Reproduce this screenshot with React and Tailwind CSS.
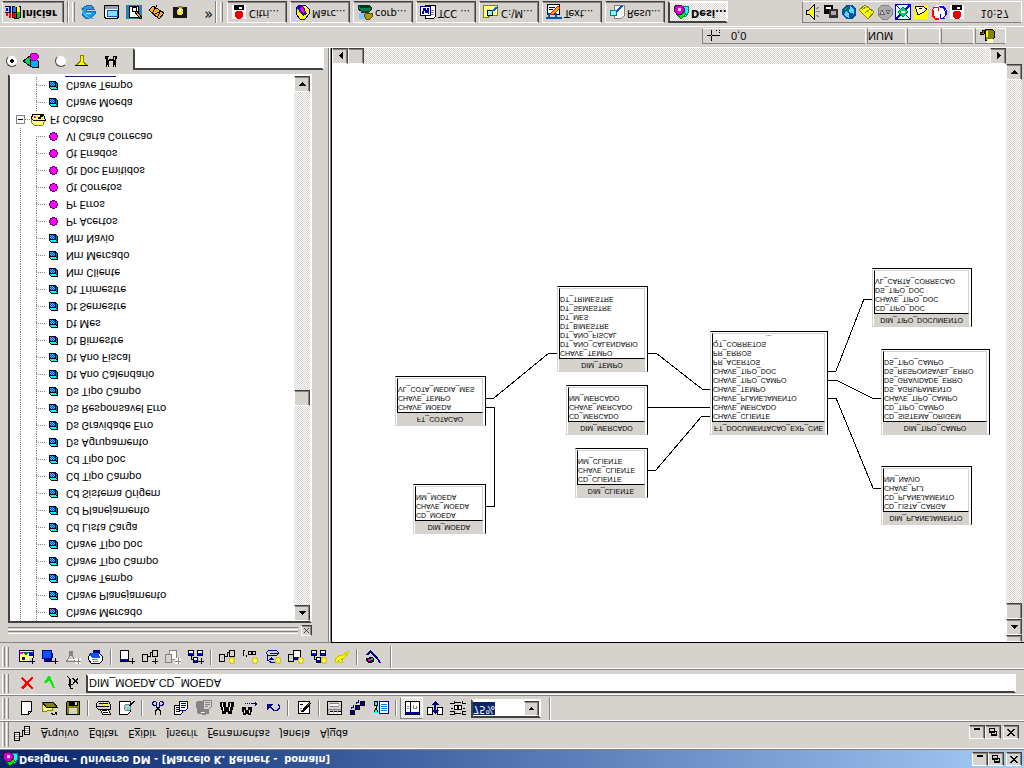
import { useState } from 'react';

// every drawing is a list of [path, fill, stroke]
const ICONS = {
  blank: [['M2.5 1.5h7l3 3v10h-10z', '#fff', '#000'], ['M9.5 1.5v3h3', 'none', '#000']],
  open: [
    ['M0.5 13.5v-9h4l1 1h5v3', '#ffff84', '#848200'], ['M0.5 13.5l4-5h11l-4 5z', '#848200', '#000'],
    ['M9.5 2.5l2-1h1l2 2M12.5 3.5h2v-2', 'none', '#000'],
  ],
  save: [
    ['M1.5 1.5h13v13h-12l-1-1z', '#848200', '#000'], ['M4 2h8v6h-8z', '#d6d3ce'],
    ['M4 10h9v5h-9z', '#000'], ['M10 11h2v3h-2z', '#d6d3ce'],
  ],
  print: [
    ['M4.5 6.5l2-5h8l-2 5z', '#fff', '#000'], ['M7 3.5h5M6 5.5h5', 'none', '#000'],
    ['M0.5 8.5l2-2h12v5l-2 3h-10l-2-2z', '#d6d3ce', '#000'], ['M1 9.5h12M3 12.5h9', 'none', '#000'],
    ['M7 10h4v2h-4z', '#ffff00'],
  ],
  preview: [
    ['M0.5 1.5h8l3 3v10h-11z', '#fff', '#000'], ['M6.5 5.5h4l1 1v4l-1 1h-4l-1-1v-4z', '#adcfce', '#848284'],
    ['M8 6h2v2h-2z', '#00ffff'], ['M10 10l5 5M11 10l5 5', 'none', '#000'],
  ],
  cut: [
    ['M5.5 1v4l4 4M10.5 1v4l-4 4', 'none', '#000'],
    ['M6.5 9.5v4l-1 1h-2l-1-2l1-2h3M9.5 9.5v4l1 1h2l1-2l-1-2h-3', 'none', '#000084'],
  ],
  copy: [
    ['M1.5 1.5h6l2 2v7h-8z', '#fff', '#000'], ['M3 4.5h4M3 6.5h4M3 8.5h3', 'none', '#000'],
    ['M6.5 5.5h6l2 2v7h-8z', '#fff', '#000084'], ['M8 8.5h4M8 10.5h5M8 12.5h5', 'none', '#000084'],
  ],
  paste: [
    ['M1 3l2-1h2l1-1h3l1 1h2l1 1v11l-1 1h-11l-1-1z', '#848284'],
    ['M7.5 6.5h5l3 3v6h-8z', '#d6d3ce', '#848284'], ['M9 9.5h3M9 11.5h5M9 13.5h5', 'none', '#848284'],
    ['M5 3.5h4', 'none', '#fff'],
  ],
  find: [
    ['M3 2h4v2h2v-2h4v3l2 5v4h-6v-5h-2v5h-6v-4l2-5z', '#000'],
    ['M4.5 5v4M3.5 9v4M10.5 5v4M11.5 9v4', 'none', '#fff'],
  ],
  findNext: [
    ['M1 1h3v1h2v-1h3v2l1 2v4h-4v-3h-2v3h-4v-4l1-2z', '#000'],
    ['M2.5 3v3M7.5 3v3', 'none', '#fff'],
    ['M3 12.5h1M5 12.5h1M7 12.5h1M9 12.5h6M13.5 10.5v4M14.5 11.5v2', 'none', '#000084'],
  ],
  undo: [['M4 10.5l5-5h3l2 2v3l-1 1', 'none', '#000084'], ['M2 6v6h6z', '#000084']],
  edit: [
    ['M2.5 2.5h11v12h-11z', '#fff', '#000'], ['M4 5.5h3M4 7.5h2', 'none', '#848284'],
    ['M6 4l8 9M7 4l8 9M5 4l8 9', 'none', '#000'], ['M4 11.5h3', 'none', '#000'], ['M11 10l3 3', 'none', '#848200'],
  ],
  props: [
    ['M0.5 1.5h14v13h-14z', '#d6d3ce', '#000'], ['M1 2h13v4h-13z', '#bdbabd'], ['M3 9h8v3h-8z', '#fff'],
    ['M3 9.5h9M3 12.5h9M1 6.5h13', 'none', '#848284'],
    ['M3 2h3v2h-3zM7 2h3v2h-3zM11 2h3v2h-3z', '#fff'], ['M3 4.5h3M7 4.5h3M11 4.5h3', 'none', '#000'],
  ],
  steps: [
    ['M0 1h5v5h-5zM5 6h5v5h-5zM10 10h5v5h-5z', '#000'], ['M1 2h3v3h-3zM6 7h3v3h-3zM11 11h3v3h-3z', '#0000a5'],
    ['M2 3h1v1h-1zM7 8h1v1h-1zM12 12h1v1h-1z', '#000'],
    ['M1.5 7v2h2M3 8v3M6.500 12v2h2M8 13v3', 'none', '#0000a5'],
  ],
  list: [
    ['M6.5 2.5h9v12h-9z', '#fff', '#000084'], ['M8 5.5h6M8 7.5h6M8 9.5h6M8 11.5h6', 'none', '#0082ff'],
    ['M1.500 10.500h3v4h-3zM3 8v2M0.500 3.500l2.500 4l2.500 -4', '#00ffff', '#000'],
  ],
  panes: [
    ['M1.5 1.5h14v13h-14z', '#fff', '#000'], ['M2 2h13v2h-13z', '#0000a5'],
    ['M6.5 4v10', 'none', '#000'], ['M3 7.5h2M3 9.5h2M9 11.5v-4h3v3', 'none', '#848284'],
  ],
  arrange: [
    ['M0.5 1.5h15v7h-15zM5.5 1.5v7M10.5 1.5v7', '#fff', '#000'], ['M6 1h4v8h-4z', '#d6d3ce'],
    ['M8 2l4 4h-3v5h3l-4 4l-4-4h3v-5h-3z', '#000084'],
  ],
  zoomFit: [
    ['M4.5 6.5h3v4h-3zM8.5 6.5h3v4h-3z', '#fff', '#000'],
    ['M0 1.5h4v3h-4M16 1.5h-4v3h4M0 12.5h4v3M16 12.5h-4v3M1 7.5h2M13 7.5h2M5 2.5h6M5 13.5h6', 'none', '#000'],
  ],
  newClass: [
    ['M0.5 3.5h14v11h-14z', '#ffff94', '#000'], ['M1 11h3v2h-3z', '#ef00ef'], ['M4 13h6l-3-4z', '#008200'],
    ['M10 9h4v4h-4z', '#0000ff'], ['M3 5h3v3h-3z', '#0000a5'], ['M1 14h14v1h-14z', '#000'],
  ],
  newObject: [
    ['M0.5 6.5h9v8h-9z', '#0055ff', '#000084'], ['M2 3h9v9h-2v-6h-7z', '#0000a5'], ['M4 3.500h7', 'none', '#000'],
  ],
  newCond: [
    ['M1.5 3.5h9l-3 5v5h-3v-5z', '#d6d3ce', '#848284'], ['M3 5.500h7', 'none', '#fff'], ['M5 9h2v5h-2z', '#848284'],
  ],
  hand: [
    ['M3.5 1.5h8l3 3v4l-3 3h-9l-2-3v-3z', '#fff', '#000'], ['M4 7h8l-1 5h-8l-1-2z', '#0055ff'], ['M5 12h7v3h-7z', '#000084'],
    ['M4.500 3.500h5M3.500 5.500h6', 'none', '#848284'],
  ],
  addTable: [['M1.5 3.5h8v11h-8z', '#fff', '#000'], ['M2 4h7v2h-7z', '#0000a5']],
  addJoin: [['M0.5 3.5h5v7h-5zM10.5 8.5h5v6h-5z', '#d6d3ce', '#000'], ['M6 8.5h2v4h2', 'none', '#000']],
  addAlias: [['M4.5 5.5h7v9h-7z', '#fff', '#848284'], ['M0.5 2.500h6v8h-6z', '#d6d3ce', '#848284']],
  addContext: [
    ['M0.5 9.5h5v5h-5zM9.5 9.5h5v5h-5zM5.5 2.5h4v5h-4z', '#fff', '#000'],
    ['M1 10h4v2h-4zM10 10h4v2h-4zM6 3h3v2h-3z', '#0000ff'], ['M3.5 9v-3h2', 'none', '#000'],
  ],
  cardinality: [['M1.5 9v6M2.5 14v1M4.5 8v2M6.500 10.500h3v3h-3zM10.500 10.500h3v3h-3z', 'none', '#000']],
  loops: [
    ['M3.5 9.5h8l2 2v1l-2 2h-8l-2-2v-1zM5 11.5h8M2.500 10v-5l3-2h4', 'none', '#000084'], ['M7 8l-4-3h6z', '#0000ce'],
  ],
  detectAlias: [['M5.5 5.5h7v9h-7z', '#fff', '#000'], ['M0.5 3.500h5v7h-5z', '#d6d3ce', '#000'], ['M6 6h6v2h-6z', '#0000a5']],
  checkAll: [
    ['M1 3l3-1l1 2l2-2l2 1l-1 3l2 1l5 6l-1 1l-6-5l-3 1l-2-3l-2-1z', '#ffff00', '#cec700'], ['M4 4h1v1h-1zM7 5h1v1h-1z', '#848200'],
  ],
  hierarchy: [
    ['M1.5 10l4 4M2.500 10l3 3l10-11M5.500 14.500l10-11', 'none', '#000084'], ['M1 4l3-2l5 1v4l-3 1l-5-1z', '#000'],
    ['M3 4h3v2h-3z', '#ef00ef'], ['M6 5h2v2h-2z', '#00cf63'],
  ],
  cancel: [['M2 3l2-1l4 4l5-4l1 1l-4 5l4 5l-1 1l-5-4l-5 4l-1-1l4-5z', '#ff0000']],
  accept: [['M2 8h2l3 3l4-8h2l-5 12h-2z', '#00ef00']],
  fx: [['M7.5 2.5h-2l-1 3v7l-2 2M3 6.5h5M8 7.5l5 5M13 7.5l-5 5M7 12.5h2', 'none', '#000'], ['M5 4h1v8h-1z', '#000']],
  schema: [
    ['M0.5 1.5h5v8h-5zM10.5 7.5h5v8h-5z', '#fff', '#000'], ['M6 5.5h2v6h2', 'none', '#000'],
    ['M1 3.5h4M1 5.5h4M1 7.500h4M11 9.5h4M11 11.5h4M11 13.500h4', 'none', '#848284'],
  ],
  designer: [
    ['M8 4h5l2 3v7h-7z', '#00ffff', '#008284'], ['M2 8l6-7l5 5l-5 6z', '#00ef00', '#008200'],
    ['M1 9l3-3h5l2 3v3l-3 3h-4l-3-2z', '#ce00ce', '#5a005a'], ['M5 9h3v3h-3z', '#ffbeff'],
  ],
  windows: [
    ['M7 2l4-1l5 1v12l-4-1l-5 1z', '#000'], ['M8 3l3-1v5h-3z', '#ff0000'], ['M12 2l3 1v5h-3z', '#00cf00'],
    ['M8 8h3v5h-3z', '#0082ff'], ['M12 8h3v5h-3z', '#ffff00'],
    ['M1 4h2v3h-2zM4 2h2v5h-2z', '#ff0000'], ['M0 7h6v1h-6zM0 13h6v1h-6z', '#000'], ['M1 9h2v3h-2zM4 8h2v5h-2z', '#0000ff'],
  ],
  ie: [
    ['M2 6l3-4h6l4 4v3h-9v2h8l-2 3l-4 1l-4-2l-2-3z', '#299ad6', '#1865b5'], ['M6 6h5v1h-5z', '#c6ebff'],
    ['M1 13l2-6l6-5l5-1', 'none', '#52c3ff'],
  ],
  mail: [
    ['M1.5 2.5l2-1h11l1 2v11h-14z', '#fff', '#000'], ['M2 11h13v3h-13z', '#9c9aad'],
    ['M4.5 3.5h10v6h-10z', '#84dfff', '#0055c6'],
  ],
  desktop: [
    ['M0 1h16v14h-16z', '#2982ad'], ['M3.5 2.5h9v11h-9z', '#fff', '#000'], ['M6.500 8.500h4v4h-4z', '#ffffce', '#000'],
    ['M9 8l2 1l5-7l-2-1z', '#ffaa00', '#000'],
  ],
  channel: [['M0 10l4 4l11-7l-5-6z', '#ffaa18', '#000'], ['M3 6l5 9M8 2l4 8M4 5l8 4', 'none', '#000']],
  lamp: [
    ['M1 2h14v11h-14z', '#181818'], ['M6 5h4l1 2v3l-2 2h-2l-2-2v-3z', '#ffdf39'], ['M7 8h2v3h-2z', '#fff'], ['M6 12h5v2h-5z', '#8c8a5a'],
  ],
  citrix: [['M1 1h14v14h-14z', '#fff'], ['M4 3h8v5h-8zM6 1h4v8h-4zM5 2h6v7h-6z', '#ef0000'], ['M3 10h10v5h-10z', '#000'], ['M8 11h3v2h-3z', '#fff']],
  marc: [['M2 6l4-5h5l4 5v5l-4 4h-6l-3-4z', '#ffff00', '#000084'], ['M2 12l3 3l5-2l3-7l-4-2l-4 5z', '#3100ad'], ['M6 12l3-5l2 1l-3 6z', '#ff00ff']],
  corp: [
    ['M1 11l3-2h9l2 3l-3 3h-10z', '#008252', '#003018'], ['M3 12h10v2h-10z', '#00351a'],
    ['M2 1h6v6h-6z', '#84c6ff'], ['M9 1h4l2 2v4h-6l-2-2z', '#ad9a00', '#525100'], ['M4 7h8v2h-8z', '#313031'],
  ],
  word: [
    ['M5.5 1.5h8l2 2v11h-10z', '#fff', '#000'], ['M0.5 4.5h10v9h-10z', '#fff', '#000084'],
    ['M2 6l2 6l2-5l2 5l1-6', 'none', '#0000a5'], ['M3 6l2 6l2-5l1 5', 'none', '#0000a5'], ['M11 5.5h3M11 7.5h3M11 9.5h3', 'none', '#848284'],
  ],
  explore: [
    ['M0.5 2.5h5l1 2h8v10h-14z', '#ffff94', '#848200'], ['M4.5 4.5h5v5h-5z', '#84ffff', '#000'],
    ['M9 9l6 5M9 8l6 5', 'none', '#0055ff'],
  ],
  textpad: [
    ['M1.5 5.5h12v10h-12z', '#fff', '#000'], ['M3 12.500h6M3 10.500h4', 'none', '#000'], ['M4 6l8 8l2-2l-7-7z', '#ffaa00', '#ff0000'],
    ['M0 1h16v2h-5v4h-2v-4h-5v4h-2v-4h-2z', '#0055c6'],
  ],
  resu: [
    ['M5.5 1.5h7l3 3v10h-10z', '#fff', '#848284'], ['M1.5 4.5h6v5h-6z', '#84ffff', '#008284'], ['M7 9l6 6M7 8l6 6M8 8l6 6', 'none', '#0055ff'],
  ],
  speaker: [['M1 6h3l5-5v14l-5-5h-3z', '#ffff00', '#000'], ['M11 5l3-2M11 8.5h4M11 11l3 2', 'none', '#848284']],
  machines: [['M1 6h9v9h-9z', '#000'], ['M3 11h5v2h-5z', '#fff'], ['M6 2h9v9h-9z', '#313131'], ['M8 5h5v4h-5z', '#adaaad']],
  globe: [['M1 5l4-4h6l4 4v6l-4 4h-6l-4-4z', '#00559c'], ['M3 5l5-3v4l-3 3zM8 8l5-2v5l-4 3z', '#5ad7ff'], ['M3 10l3 1v3z', '#009a52']],
  note: [['M0 10l6 5l9-7l-6-7z', '#ffff00', '#848200'], ['M3 10l4 3M6 7l5 4', 'none', '#848284']],
  sync: [['M1 5l4-4h6l4 4v6l-4 4h-6l-4-4z', '#adaaad', '#848284'], ['M3 6h4l-2 4zM9 10h4l-2-4z', '#d6d3ce', '#636163']],
  net: [
    ['M0.5 0.5h15v15h-15z', '#dfffff', '#0000a5'], ['M1 1l14 14M15 1l-14 14M1 2l13 13M2 1l13 13', 'none', '#0000ff'],
    ['M8 3l5 5l-5 5l-5-5z', '#00cf63', '#008242'], ['M6 7h4v2h-4z', '#fff'],
  ],
  pen: [['M1 1h14v14h-14z', '#ffff00'], ['M2 14l3-9l6 3l3 3l-5 3z', '#ffffce', '#000'], ['M6 11h3v1h-3z', '#000']],
  cycle: [
    ['M1 5l4-4h6l4 4v6l-4 4h-6l-4-4z', '#fff'], ['M8 1h-4l-3 4v5l3 3M2 13h5v-4M8 2h-4l-2 4v4', 'none', '#ff0000'],
    ['M8 14h4l3-4v-5l-3-3M9 6v-4h5M9 13h3l2-4v-4', 'none', '#0000ff'],
  ],
  plug: [['M5 4h7l2 2v7l-2 2h-6l-1-2z', '#848200', '#000'], ['M7 1h6v4h-6z', '#ffffce'], ['M1 9l3 1v4h-2v-2h-2z', '#848200', '#000'], ['M6 7h2v6h-2z', '#ffff00']],
  cross: [['M0 8.5h4M5 8.500h6M4.500 3v5M4.500 9v5', 'none', '#000'], ['M11 8.500h2M12.500 13v1M12.500 11v1M9 13.500h1', 'none', '#000']],
  objects: [
    ['M0 8l7-5v10z', '#00cf63', '#000'], ['M7.5 3.5l2-2h6v6l-2 2h-6z', '#00aaff', '#000'], ['M8 9h5l2 2v3l-2 2h-4l-2-2v-3z', '#ef00ef', '#840084'],
  ],
  cond: [['M1 3.5h11l-4 4v6h-3v-6z', '#ffff00', '#848200'], ['M0 3h13v1h-13z', '#000']],
};
ICONS.detectJoin = ICONS.addJoin;
ICONS.detectContext = ICONS.addContext;

// small badges: "new" is a plus, "detect" is a light
const BADGES = {
  '+': [['M10 1h6v6h-6z', '#d6d3ce'], ['M13 1h1v6h-1zM10 3h7v1h-7z', '#000']],
  '-': [['M10 1h6v6h-6z', '#fff'], ['M13 1h1v6h-1zM10 3h7v1h-7z', '#848284']],
  '*': [['M11.5 1.5h3l1 2v2l-1 2h-3l-1-2v-2z', '#ffff00', '#cebe4a'], ['M12 3h2v2h-2z', '#ffffce']],
};

function Icon({ name, badge, className = '' }) {
  const paths = badge ? [...ICONS[name], ...BADGES[badge]] : ICONS[name];
  return (
    <svg width="16" height="16" viewBox="0 0 16 16" shapeRendering="crispEdges" className={`shrink-0 ${className}`} aria-hidden="true">
      {paths.map(([d, fill, stroke], i) => <path key={i} d={d} fill={fill} stroke={stroke || 'none'} />)}
    </svg>
  );
}

const RAISED = 'border border-t-white border-l-white border-r-[#424142] border-b-[#424142] bg-[#d6d3ce] shadow-[inset_-1px_-1px_#848284]';
const SUNKEN = 'border border-t-[#848284] border-l-[#848284] border-r-white border-b-white';
const WELL = 'border-2 border-t-[#424142] border-l-[#424142] border-r-white border-b-white bg-white';
const DITHER = 'bg-[repeating-conic-gradient(#ffffff_0_25%,#d6d3ce_0_50%)] bg-[length:2px_2px]';
const UI = "font-['DejaVu_Sans_Condensed','DejaVu_Sans',sans-serif]";

const ARROWS = { up: 'M4 1h1v1h1v1h1v1h1v1h-7v-1h1v-1h1v-1h1z', down: 'M1 1h7v1h-1v1h-1v1h-1v1h-1v-1h-1v-1h-1v-1h-1z', left: 'M3 3h1v-1h1v-1h1v-1h1v7h-1v-1h-1v-1h-1v-1h-1z', right: 'M3 0h1v1h1v1h1v1h1v1h-1v1h-1v1h-1v1h-1z' };

function ScrollButton({ dir }) {
  return (
    <button aria-label={`Scroll ${dir}`} className={`flex h-4 w-4 shrink-0 items-center justify-center ${RAISED}`}>
      <svg width="9" height="7" viewBox="0 0 9 7" shapeRendering="crispEdges"><path d={ARROWS[dir]} /></svg>
    </button>
  );
}

function Grip() {
  return (
    <div className="flex w-[15px] shrink-0 gap-px self-stretch py-px pl-[2px]">
      <div className="w-[3px] border-l border-r border-l-white border-r-[#848284]" />
      <div className="w-[3px] border-l border-r border-l-white border-r-[#848284]" />
    </div>
  );
}

function Sep() {
  return <div className="mx-[3px] h-4 w-[2px] shrink-0 border-l border-r border-l-[#848284] border-r-white" />;
}

function Bar({ children, className = 'h-[26px] pb-[2px]' }) {
  return (
    <div className={`flex shrink-0 items-center border-b border-b-white shadow-[inset_0_-1px_#848284] ${className}`}>
      {children}
    </div>
  );
}

function Tools({ groups }) {
  return groups.map((group, i) => (
    <div key={i} className="flex items-center">
      {i > 0 && <Sep />}
      {group.map((t) => {
        const [name, badge] = t.split(' ');
        return (
          <button key={t} aria-label={name} className={`flex h-[22px] w-[23px] items-center justify-center ${name === 'panes' ? `${SUNKEN} ${DITHER}` : ''}`}>
            <Icon name={name} badge={badge} />
          </button>
        );
      })}
    </div>
  ));
}

const CAPTION = {
  Minimize: [['M3 8h6v2h-6z', '#000']],
  Restore: [['M4.5 2.5h5v4h-5zM4 3.5h6', 'none', '#000'], ['M2.5 5.5h5v4h-5zM2 6.5h6', '#d6d3ce', '#000']],
  Close: [['M2 2h2v1h1v1h2v-1h1v-1h2v1h-1v1h-1v1h-1v1h1v1h1v1h1v1h-2v-1h-1v-1h-2v1h-1v1h-2v-1h1v-1h1v-1h1v-1h-1v-1h-1v-1h-1z', '#000']],
};

function CaptionButtons({ className = '' }) {
  return (
    <div className={`ml-auto flex ${className}`}>
      {Object.keys(CAPTION).map((label) => (
        <button key={label} aria-label={label} className={`flex h-[14px] w-4 items-center justify-center ${RAISED} ${label === 'Close' ? 'ml-[2px]' : ''}`}>
          <svg width="12" height="12" viewBox="0 0 12 12" shapeRendering="crispEdges" className="shrink-0">
            {CAPTION[label].map(([d, fill, stroke], i) => <path key={i} d={d} fill={fill} stroke={stroke} />)}
          </svg>
        </button>
      ))}
    </div>
  );
}

const MENU = [['', 'A', 'rquivo'], ['', 'E', 'ditar'], ['E', 'x', 'ibir'], ['', 'I', 'nserir'], ['', 'F', 'erramentas'], ['', 'J', 'anela'], ['Aj', 'u', 'da']];

const DIMENSIONS = [
  'Chave Mercado', 'Chave Planejamento', 'Chave Tempo', 'Chave Tipo Campo', 'Chave Tipo Doc',
  'Cd Lista Carga', 'Cd Planejamento', 'Cd Sistema Origem', 'Cd Tipo Campo', 'Cd Tipo Doc',
  'Ds Agrupamento', 'Ds Gravidade Erro', 'Ds Responsavel Erro', 'Ds Tipo Campo',
  'Dt Ano Calendario', 'Dt Ano Fiscal', 'Dt Bimestre', 'Dt Mes', 'Dt Semestre', 'Dt Trimestre',
  'Nm Cliente', 'Nm Mercado', 'Nm Navio',
];
const MEASURES = ['Pr Acertos', 'Pr Erros', 'Qt Corretos', 'Qt Doc Emitidos', 'Qt Errados', 'Vl Carta Correcao'];

function TreeItem({ label, measure, outer = true, last }) {
  return (
    <li className="flex h-[17px] items-center">
      <div className={`ml-[10px] w-4 self-stretch border-l border-dotted ${outer ? 'border-[#848284]' : 'border-transparent'}`} />
      <div className="flex w-[13px] flex-col self-stretch">
        <div className="h-[9px] w-[9px] border-b border-l border-dotted border-[#848284]" />
        <div className={`h-2 border-l border-dotted ${last ? 'border-transparent' : 'border-[#848284]'}`} />
      </div>
      <svg width="9" height="9" viewBox="0 0 9 9" shapeRendering="crispEdges" className="shrink-0" aria-hidden="true">
        {measure ? (
          <>
            <path d="M3 0h3v1h2v2h1v3h-1v2h-2v1h-3v-1h-2v-2h-1v-3h1v-2h2z" fill="#5a005a" />
            <path d="M3 1h3v1h1v1h1v3h-1v1h-1v1h-3v-1h-1v-1h-1v-3h1v-1h1z" fill="#ff00ff" />
          </>
        ) : (
          <>
            <path d="M0 2h1v-1h1v-1h7v7h-1v1h-1v1h-7z" fill="#000" />
            <path d="M2 1h6v1h-1v1h-6v-1h1z" fill="#00ffff" />
            <path d="M7 3h1v4h-1z" fill="#008284" />
            <path d="M1 4h5v4h-5z" fill="#0041ff" />
            <path d="M2 4h1v1h-1zM4 4h1v1h-1zM1 5h1v1h-1zM3 5h1v1h-1zM5 5h1v1h-1zM2 6h1v1h-1zM4 6h1v1h-1zM1 7h1v1h-1zM3 7h1v1h-1z" fill="#42c3ff" />
          </>
        )}
      </svg>
      <span className="ml-2 whitespace-nowrap">{label}</span>
    </li>
  );
}

function ObjectTree() {
  return (
    <div className={`flex min-h-0 flex-1 ${WELL}`}>
      <ul className="min-w-0 flex-1 overflow-hidden font-[Roboto,sans-serif] text-[11px] leading-[15px]">
        {DIMENSIONS.map((l) => <TreeItem key={l} label={l} />)}
        {MEASURES.map((l, i) => <TreeItem key={l} label={l} measure last={i === MEASURES.length - 1} />)}
        <li className="flex h-[17px] items-center">
          <button aria-label="Collapse Ft Cotacao" className="ml-[6px] flex h-[9px] w-[9px] items-center justify-center border border-[#848284] bg-white">
            <span className="h-px w-[5px] bg-black" />
          </button>
          <div className="w-[5px] border-t border-dotted border-[#848284]" />
          <svg width="16" height="13" viewBox="0 0 16 13" shapeRendering="crispEdges" className="shrink-0" aria-hidden="true">
            <path d="M1 4l3-3h9l1 3v5h-11z" fill="#ffff84" stroke="#848200" />
            <path d="M1.500 7.500l2-2h12l-2 6h-11z" fill="#ffff52" stroke="#000" />
            <path d="M4 8h2v2h-2z" fill="#ff00ff" />
            <path d="M8 7h3v2h-3zM10 9h3v2h-3z" fill="#000" />
          </svg>
          <span className="ml-1">Ft Cotacao</span>
        </li>
        <TreeItem label="Chave Moeda" outer={false} />
        <TreeItem label="Chave Tempo" outer={false} />
        <li className="ml-[55px] h-[2px] w-[51px] bg-[#08246b]" />
      </ul>
      <div className={`flex w-4 flex-col ${DITHER}`}>
        <ScrollButton dir="up" />
        <div className="flex-[199]" />
        <div className={`h-4 shrink-0 ${RAISED}`} />
        <div className="flex-[298]" />
        <ScrollButton dir="down" />
      </div>
    </div>
  );
}

const TABLES = [
  { name: 'FT_COTACAO', x: 63, y: 216, w: 91, fields: ['CHAVE_MOEDA', 'CHAVE_TEMPO', 'VL_COTA_MEDIA_MES'] },
  { name: 'DIM_MOEDA', x: 81, y: 108, w: 73, fields: ['CD_MOEDA', 'CHAVE_MOEDA', 'NM_MOEDA'] },
  { name: 'DIM_TEMPO', x: 225, y: 270, w: 91, fields: ['CHAVE_TEMPO', 'DT_ANO_CALENDARIO', 'DT_ANO_FISCAL', 'DT_BIMESTRE', 'DT_MES', 'DT_SEMESTRE', 'DT_TRIMESTRE'] },
  { name: 'DIM_MERCADO', x: 234, y: 207, w: 82, fields: ['CD_MERCADO', 'CHAVE_MERCADO', 'NM_MERCADO'] },
  { name: 'DIM_CLIENTE', x: 243, y: 144, w: 73, fields: ['CD_CLIENTE', 'CHAVE_CLIENTE', 'NM_CLIENTE'] },
  { name: 'FT_DOCUMENTACAO_EXP_CNE', x: 378, y: 207, w: 118, more: true, fields: ['CHAVE_CLIENTE', 'CHAVE_MERCADO', 'CHAVE_PLANEJAMENTO', 'CHAVE_TEMPO', 'CHAVE_TIPO_CAMPO', 'CHAVE_TIPO_DOC', 'PR_ACERTOS', 'PR_ERROS', 'QT_CORRETOS'] },
  { name: 'DIM_TIPO_DOCUMENTO', x: 540, y: 315, w: 100, fields: ['CD_TIPO_DOC', 'CHAVE_TIPO_DOC', 'DS_TIPO_DOC', 'VL_CARTA_CORRECAO'] },
  { name: 'DIM_TIPO_CAMPO', x: 549, y: 207, w: 109, fields: ['CD_SISTEMA_ORIGEM', 'CD_TIPO_CAMPO', 'CHAVE_TIPO_CAMPO', 'DS_AGRUPAMENTO', 'DS_GRAVIDADE_ERRO', 'DS_RESPONSAVEL_ERRO', 'DS_TIPO_CAMPO'] },
  { name: 'DIM_PLANEJAMENTO', x: 549, y: 117, w: 91, fields: ['CD_LISTA_CARGA', 'CD_PLANEJAMENTO', 'CHAVE_PLJ', 'NM_NAVIO'] },
];

const JOINS = [
  '154,244 162,244 217,289 225,289',
  '154,235 162,235 162,136 154,136',
  '316,289 324,289 370,253 378,253',
  '316,235 378,235',
  '316,172 324,172 370,226 378,226',
  '496,271 504,271 532,343 540,343',
  '496,262 504,262 540,244 549,244',
  '496,244 504,244 541,154 549,154',
];

function TableBox({ table }) {
  return (
    <div
      className="absolute border border-t-[#d6d3ce] border-l-[#d6d3ce] border-r-black border-b-black bg-white pr-[2px] pb-px pl-px"
      style={{ left: table.x, top: table.y, width: table.w }}
    >
      <div className="h-3 bg-[#d6d3ce] text-center leading-[12px] whitespace-nowrap">{table.name}</div>
      <ul className="relative border border-t-black border-l-black border-r-[#d6d3ce] border-b-[#d6d3ce] bg-white pb-[6px]">
        {table.fields.map((f) => <li key={f} className="h-[9px] leading-[9px]">{f}</li>)}
        {table.more && <li className="absolute inset-x-0 bottom-0 text-center leading-[6px]">...</li>}
      </ul>
    </div>
  );
}

const TASKS = [
  ['citrix', 'Citri...'], ['marc', 'Marc...'], ['corp', 'corp...'], ['word', 'TCC ...'],
  ['explore', 'C:\\M...'], ['textpad', 'Text...'], ['resu', 'Resu...'], ['designer', 'Desi...'],
];

export default function App() {
  const [formula, setFormula] = useState('DIM_MOEDA.CD_MOEDA');
  const [zoom, setZoom] = useState('75%');
  const [filter, setFilter] = useState('objects');
  const [search, setSearch] = useState('');

  return (
    <div className={`flex h-screen -scale-y-100 flex-col overflow-hidden bg-[#d6d3ce] text-[11px] text-black ${UI}`}>
      <header className="flex h-[18px] shrink-0 items-center bg-linear-to-r from-[#08246b] to-[#a5cbf7] pr-[2px] pl-[2px]">
        <Icon name="designer" />
        <h1 className="ml-px text-[11px] font-bold whitespace-pre text-white">Designer - Universo DM - [Marcelo K. Reinert -  bomain]</h1>
        <CaptionButtons />
      </header>
      <div className="h-[2px] shrink-0 border-t border-t-[#848284] bg-white" />

      <Bar className="h-7 pr-[5px]">
        <Grip />
        <Icon name="schema" className="-ml-px" />
        <nav className="ml-[11px] flex gap-[10px] pt-[3px]">
          {MENU.map(([a, key, b]) => (
            <button key={key + b}>{a}<span className="underline">{key}</span>{b}</button>
          ))}
        </nav>
        <CaptionButtons className="mb-1 self-end" />
      </Bar>

      <Bar>
        <Grip />
        <Tools
          groups={[
            ['blank', 'open', 'save'], ['print', 'preview'],
            ['cut', 'copy', 'paste', 'find', 'findNext', 'undo'],
            ['edit'], ['props', 'steps', 'list'], ['panes', 'arrange', 'zoomFit'],
          ]}
        />
        <div className={`ml-[2px] flex h-[19px] w-[70px] items-center ${WELL}`}>
          <input aria-label="Zoom" value={zoom} onChange={(e) => setZoom(e.target.value)} className="h-[13px] w-[22px] bg-[#08246b] text-white outline-none" />
          <button aria-label="Zoom list" className={`ml-auto flex h-full w-[15px] items-center justify-center ${RAISED}`}>
            <svg width="5" height="3" viewBox="0 0 5 3" shapeRendering="crispEdges"><path d="M0 0h5v1h-1v1h-1v1h-1v-1h-1v-1h-1z" /></svg>
          </button>
        </div>
        <div className="ml-2 w-[2px] self-stretch border-l border-l-[#848284] bg-white" />
      </Bar>

      <Bar className="h-[26px] pb-1">
        <Grip />
        <Tools groups={[['cancel', 'accept', 'fx']]} />
        <input
          aria-label="Formula" value={formula} onChange={(e) => setFormula(e.target.value)}
          className={`mr-2 ml-[2px] h-[19px] min-w-0 flex-1 pl-px font-['Liberation_Sans',Arial,sans-serif] outline-none ${WELL}`}
        />
      </Bar>

      <div className="flex h-[25px] shrink-0 items-center pb-[3px]">
        <Grip />
        <Tools
          groups={[
            ['newClass +', 'newObject +', 'newCond -', 'hand'],
            ['addTable +', 'addJoin +', 'addAlias -', 'addContext +'],
            ['detectJoin *', 'cardinality *', 'loops *', 'detectAlias *', 'detectContext *', 'checkAll'],
            ['hierarchy'],
          ]}
        />
        <div className="ml-[6px] w-[2px] self-stretch border-l border-l-[#848284] bg-white" />
      </div>

      <main className="flex min-h-0 flex-1">
        <aside className="flex w-[324px] shrink-0 flex-col border-t border-t-[#848284] pt-[6px] pl-2">
          <div className="mr-3 flex h-[11px] shrink-0 items-center">
            <div className="flex flex-1 flex-col gap-px">
              <div className="h-[3px] border-t border-b border-t-white border-b-[#848284]" />
              <div className="h-[3px] border-t border-b border-t-white border-b-[#848284]" />
            </div>
            <button aria-label="Close panel" className={`ml-[3px] flex h-[11px] w-[11px] items-center justify-center ${RAISED}`}>
              <svg width="5" height="5" viewBox="0 0 5 5" shapeRendering="crispEdges"><path d="M0 0l5 5M5 0l-5 5" stroke="#424142" /></svg>
            </button>
          </div>
          <div className="mt-[2px] mr-3 flex min-h-0 flex-1">
            <ObjectTree />
          </div>
          <div className="flex h-[26px] shrink-0 items-center">
            {['objects', 'cond'].map((v) => (
              <label key={v} className={`flex items-center ${v === 'cond' ? 'ml-4' : '-ml-[2px]'}`}>
                <input
                  type="radio" name="filter" aria-label={v} checked={filter === v} onChange={() => setFilter(v)}
                  className="h-3 w-3 appearance-none rounded-full border border-t-[#424142] border-r-[#d6d3ce] border-b-[#d6d3ce] border-l-[#424142] bg-white checked:bg-[radial-gradient(#000_2px,#fff_2px)]"
                />
                <Icon name={v} className={v === 'cond' ? 'ml-2' : 'ml-[5px]'} />
              </label>
            ))}
            <button aria-label="Find" className="ml-3">
              <svg width="16" height="16" viewBox="0 0 16 16" shapeRendering="crispEdges">
                <path d="M3 2h1v2h1v-2h1v6h4v-6h1v2h1v-2h1v8h1v3h-4v-3h-4v3h-4v-3h1z" fill="#000" />
                <path d="M5.500 9v3M11.500 9v3" stroke="#d6d3ce" />
              </svg>
            </button>
            <input
              aria-label="Search" value={search} onChange={(e) => setSearch(e.target.value)}
              className={`ml-auto h-[22px] w-[191px] self-end px-1 outline-none ${WELL}`}
            />
          </div>
        </aside>
        <div className="flex w-[7px] shrink-0 border-t border-t-[#848284]">
          <div className="ml-1 w-px bg-[#848284]" />
          <div className="w-px bg-white" />
          <div className="w-px bg-[#848284]" />
        </div>

        <section className="flex min-w-0 flex-1 border-t border-l border-black">
          <div className="flex min-w-0 flex-1 flex-col">
            <div className="relative min-h-0 flex-1 overflow-hidden bg-white font-['Liberation_Sans',Arial,sans-serif] text-[7px]">
              <svg className="absolute inset-0 h-full w-full" shapeRendering="crispEdges" aria-hidden="true">
                {JOINS.map((points) => <polyline key={points} points={points} fill="none" stroke="#000" />)}
              </svg>
              {TABLES.map((t) => <TableBox key={t.name} table={t} />)}
            </div>
            <div className={`flex h-4 shrink-0 ${DITHER}`}>
              <ScrollButton dir="left" />
              <div className={`w-4 ${RAISED}`} />
              <div className="flex-1" />
              <ScrollButton dir="right" />
            </div>
          </div>
          <div className="mr-[2px] flex w-4 shrink-0 flex-col">
            <div className={`h-[7px] shrink-0 ${RAISED}`} />
            <ScrollButton dir="up" />
            <div className={`h-4 shrink-0 ${RAISED}`} />
            <div className={`flex-1 ${DITHER}`} />
            <ScrollButton dir="down" />
            <div className="h-4 shrink-0" />
          </div>
        </section>
      </main>

      <div className="flex h-[21px] shrink-0 items-end justify-end gap-px border-t border-t-white pr-[18px] pb-px font-['Liberation_Sans',Arial,sans-serif]">
        <div className={`flex h-4 w-[164px] items-center pl-1 ${SUNKEN}`}>
          <Icon name="cross" /><span className="ml-2">0,0</span>
        </div>
        <div className={`h-4 w-[39px] leading-[14px] ${SUNKEN}`}>NUM</div>
        <div className={`h-4 w-[33px] ${SUNKEN}`} />
        <div className={`h-4 w-[33px] ${SUNKEN}`} />
        <div className={`flex h-4 w-[31px] items-center pl-1 ${SUNKEN}`}><Icon name="plug" /></div>
      </div>

      <footer className="flex h-[27px] shrink-0 items-center border-t border-t-white px-[2px] pt-px">
        <button className={`flex h-[22px] w-[62px] items-center pl-[2px] font-bold ${RAISED}`}>
          <Icon name="windows" /><span className="ml-px">Iniciar</span>
        </button>
        <div className="ml-[3px] h-[22px] w-[2px] border-l border-l-[#848284] bg-white" />
        <div className="ml-[3px] h-5 w-[3px] border-l border-r border-l-white border-r-[#848284]" />
        <div className="ml-[5px] flex gap-[7px]">
          {['ie', 'mail', 'desktop', 'channel', 'lamp'].map((n) => <button key={n} aria-label={n}><Icon name={n} /></button>)}
        </div>
        <button className="ml-auto pb-[6px] text-[16px] leading-[16px]">»</button>
        <div className="ml-[2px] h-[22px] w-[2px] border-l border-l-[#848284] bg-white" />
        <div className="ml-[3px] h-5 w-[3px] border-l border-r border-l-white border-r-[#848284]" />
        <div className="mr-[74px] ml-1 flex gap-[3px]">
          {TASKS.map(([icon, label]) => (
            <button
              key={icon}
              className={`flex h-[22px] w-[60px] items-center pl-[3px] whitespace-nowrap ${icon === 'designer' ? `font-bold border-2 border-t-[#424142] border-l-[#424142] border-r-white border-b-white ${DITHER}` : RAISED}`}
            >
              <Icon name={icon} /><span className="ml-[2px]">{label}</span>
            </button>
          ))}
        </div>
        <div className={`flex h-[22px] w-[220px] items-center gap-[2px] pl-[2px] ${SUNKEN}`}>
          {['speaker', 'machines', 'globe', 'note', 'sync', 'net', 'pen', 'cycle', 'citrix'].map((n) => <Icon key={n} name={n} />)}
          <time className="ml-auto pr-3">10:57</time>
        </div>
      </footer>
    </div>
  );
}
